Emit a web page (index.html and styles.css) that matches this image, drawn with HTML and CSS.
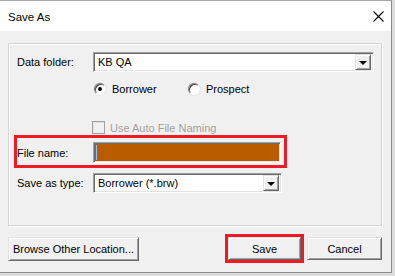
FILE: index.html
```
<!DOCTYPE html>
<html lang="en">
<head>
    <meta charset="UTF-8">
    <title>Save As</title>
    <link rel="stylesheet" href="styles.css">
</head>
<body>
    <div class="desktop">
        <div class="window">
            <div class="titlebar">
                <span class="title">Save As</span>
                <span class="close">
                    <svg width="11" height="11" viewBox="0 0 11 11">
                        <path d="M0.5 0.5 L10.5 10.5 M10.5 0.5 L0.5 10.5" stroke="#000" stroke-width="1.1" fill="none"/>
                    </svg>
                </span>
            </div>

            <div class="client">
                <div class="group">
                    <div class="row">
                        <label class="lbl">Data folder:</label>
                        <div class="combo combo-wide">
                            <span class="combo-text">KB QA</span>
                            <span class="drop"><span class="arrow"></span></span>
                        </div>
                    </div>

                    <div class="radios">
                        <span class="radio-item radio-first"><span class="radio checked"></span>Borrower</span>
                        <span class="radio-item"><span class="radio"></span>Prospect</span>
                    </div>

                    <div class="check-row">
                        <span class="checkbox"></span>
                        <span class="check-text">Use Auto File Naming</span>
                    </div>

                    <div class="row row-file">
                        <label class="lbl">File name:</label>
                        <div class="field"><span class="caret"></span></div>
                    </div>

                    <div class="row row-type">
                        <label class="lbl">Save as type:</label>
                        <div class="combo combo-type">
                            <span class="combo-text">Borrower (*.brw)</span>
                            <span class="drop"><span class="arrow"></span></span>
                        </div>
                    </div>
                </div>

                <div class="actions">
                    <button class="btn btn-browse">Browse Other Location...</button>
                    <button class="btn btn-save">Save</button>
                    <button class="btn btn-cancel">Cancel</button>
                </div>
            </div>
        </div>
    </div>
</body>
</html>
```

FILE: styles.css
```
* {
    box-sizing: border-box;
}

body {
    margin: 0;
    font-family: "Liberation Sans", Arial, sans-serif;
    font-size: 11px;
    color: #000;
    background: #d9d9d9;
}

.desktop {
    width: 395px;
    height: 276px;
    overflow: hidden;
    background: #dcdcdc;
}

.window {
    width: 392px;
    height: 273px;
    background: #f0f0f0;
    border-top: 1px solid #a8a8a8;
    border-right: 1px solid #8a8a8a;
    border-bottom: 1px solid #8a8a8a;
    display: flex;
    flex-direction: column;
}

/* title bar */
.titlebar {
    height: 30px;
    background: #fff;
    display: flex;
    align-items: center;
    padding-left: 8px;
    padding-right: 8px;
}

.title {
    font-size: 11.5px;
    flex: 1;
    padding-top: 1px;
}

.close {
    display: flex;
    margin-right: -1px;
}

/* client area */
.client {
    padding: 12px 9px 0 8px;
    flex: 1;
}

.group {
    width: 374px;
    height: 183px;
    border: 1px solid #d5d5d5;
    box-shadow: inset 1px 1px 0 #fff, 1px 1px 0 #fff;
    padding: 8px 7px 0 8px;
}

.row {
    display: flex;
    align-items: center;
}

.lbl {
    width: 76px;
    flex: none;
}

/* combo boxes */
.combo {
    height: 20px;
    background: #fff;
    border: 1px solid;
    border-color: #a0a0a0 #fff #fff #a0a0a0;
    box-shadow: inset 1px 1px 0 #696969, inset -1px -1px 0 #e3e3e3;
    display: flex;
    align-items: center;
    padding: 2px 2px 2px 3px;
}

.combo-wide {
    width: 281px;
}

.combo-type {
    width: 189px;
}

.combo-text {
    flex: 1;
    padding-left: 1px;
}

.drop {
    width: 16px;
    height: 16px;
    background: #f0f0f0;
    border: 1px solid;
    border-color: #e3e3e3 #696969 #696969 #e3e3e3;
    box-shadow: inset 1px 1px 0 #fff, inset -1px -1px 0 #a0a0a0;
    display: flex;
    align-items: center;
    justify-content: center;
}

.arrow {
    width: 0;
    height: 0;
    border-left: 4px solid transparent;
    border-right: 4px solid transparent;
    border-top: 4px solid #000;
    margin-top: 1px;
}

/* radios */
.radios {
    display: flex;
    align-items: center;
    height: 18px;
    margin-top: 8px;
    padding-left: 77px;
}

.radio-item {
    display: flex;
    align-items: center;
}

.radio-first {
    width: 94px;
}

.radio {
    width: 12px;
    height: 12px;
    border-radius: 50%;
    background: #fff;
    border: 1px solid;
    border-color: #808080 #fff #fff #808080;
    box-shadow: inset 1px 1px 0 #404040, 0 0 0 0.5px #d4d4d4;
    margin-right: 6px;
    display: flex;
    align-items: center;
    justify-content: center;
}

.radio.checked::after {
    content: "";
    width: 4px;
    height: 4px;
    border-radius: 50%;
    background: #000;
}

/* disabled checkbox */
.check-row {
    display: flex;
    align-items: center;
    height: 13px;
    margin-top: 23px;
    padding-left: 75px;
}

.checkbox {
    width: 13px;
    height: 13px;
    border: 1px solid #a0a0a0;
    background: #f0f0f0;
    box-shadow: inset 1px 1px 0 #e3e3e3;
    margin-right: 5px;
}

.check-text {
    color: #a0a0a0;
}

/* file name row with red highlight */
.row-file {
    margin-top: 1px;
    margin-left: -3px;
    width: 273px;
    border: 3px solid #ed1c24;
    padding: 4px 3px 2px 0;
}

.field {
    width: 188px;
    height: 21px;
    background: #b95c00;
    border: 1px solid;
    border-color: #a0a0a0 #fff #fff #a0a0a0;
    box-shadow: inset 1px 1px 0 #696969, inset -1px -1px 0 #e3e3e3;
    display: flex;
    align-items: center;
    padding-left: 2px;
}

.caret {
    width: 1px;
    height: 15px;
    background: #8cc4ff;
}

.row-type {
    margin-top: 5px;
}

/* bottom buttons */
.actions {
    display: flex;
    margin-top: 11px;
}

.btn {
    font-family: inherit;
    font-size: 11px;
    color: #000;
    height: 23px;
    background: #f0f0f0;
    border: 1px solid;
    border-color: #e3e3e3 #696969 #696969 #e3e3e3;
    box-shadow: inset 1px 1px 0 #fff, inset -1px -1px 0 #a0a0a0;
    padding: 0;
}

.btn-browse {
    width: 131px;
    height: 24px;
}

.btn-save {
    width: 73px;
    margin-left: auto;
    outline: 3px solid #ed1c24;
}

.btn-cancel {
    width: 75px;
    margin-left: 6px;
}
```
